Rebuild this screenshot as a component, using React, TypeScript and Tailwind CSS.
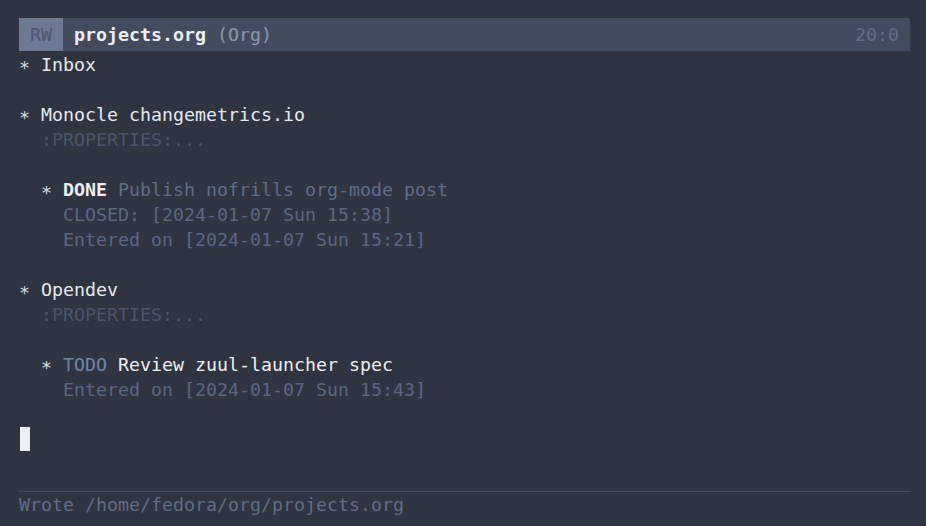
import React from "react";

const Row = ({ children }: { children?: React.ReactNode }) => (
  <div className="h-[25px] leading-[27px] whitespace-pre">{children}</div>
);

const Star = () => (
  <span className="inline-block translate-y-[3px] text-[#d8dee9]">*</span>
);

export default function App() {
  return (
    <div
      className="w-[926px] h-[526px] bg-[#2e3440] text-[#e5e9f0] text-[18.27px] flex flex-col overflow-hidden"
      style={{ fontFamily: '"DejaVu Sans Mono", monospace' }}
    >
      <div className="mt-[18px] ml-[19px] mr-[16px] h-[33px] bg-[#434c5e] flex items-center whitespace-pre leading-[31px]">
        <div className="w-[44px] h-full bg-[#6b7994] text-[#4c566a] flex items-center justify-center">RW</div>
        <div className="ml-[11px] font-bold text-[#eceff4]">projects.org</div>
        <div className="ml-[11px] text-[#9099ab]">(Org)</div>
        <div className="ml-auto mr-[11px] text-[#616e88]">20:0</div>
      </div>
      <div className="pl-[19px]">
        <Row>
          <Star /> Inbox
        </Row>
        <Row />
        <Row>
          <Star /> Monocle changemetrics.io
        </Row>
        <Row>
          <span className="text-[#4c566a]">  :PROPERTIES:...</span>
        </Row>
        <Row />
        <Row>
          {"  "}
          <Star />{" "}
          <span className="font-bold text-[#eceff4]">DONE</span>
          <span className="text-[#616e88]"> Publish nofrills org-mode post</span>
        </Row>
        <Row>
          <span className="text-[#5c6882]">    CLOSED: [2024-01-07 Sun 15:38]</span>
        </Row>
        <Row>
          <span className="text-[#5c6882]">    Entered on [2024-01-07 Sun 15:21]</span>
        </Row>
        <Row />
        <Row>
          <Star /> Opendev
        </Row>
        <Row>
          <span className="text-[#4c566a]">  :PROPERTIES:...</span>
        </Row>
        <Row />
        <Row>
          {"  "}
          <Star />{" "}
          <span className="text-[#7086a5]">TODO</span>
          <span className="text-[#eceff4]"> Review zuul-launcher spec</span>
        </Row>
        <Row>
          <span className="text-[#5c6882]">    Entered on [2024-01-07 Sun 15:43]</span>
        </Row>
        <Row />
        <div className="h-[25px] flex items-center">
          <div className="ml-[1px] w-[10px] h-[24px] bg-[#eceff4]" />
        </div>
      </div>
      <div className="mt-[40px] ml-[18px] mr-[15px] h-px bg-[#434c5e]" />
      <div className="pl-[19px] h-[25px] leading-[25px] text-[#616e88] whitespace-pre">
        Wrote /home/fedora/org/projects.org
      </div>
    </div>
  );
}
